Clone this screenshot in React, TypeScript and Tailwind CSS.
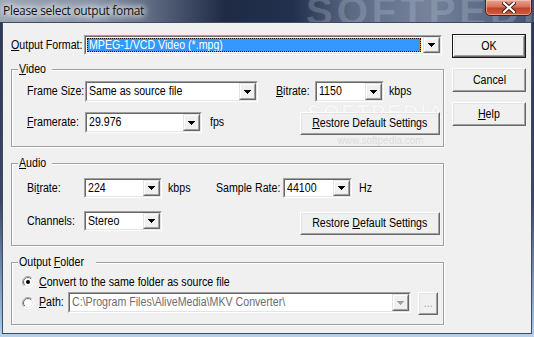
import React from "react";

const FONT = "font-['Liberation_Sans',Arial,sans-serif]";

function T({ children, center }: { children: React.ReactNode; center?: boolean }) {
  return (
    <span className={`inline-block whitespace-nowrap scale-x-[0.85] ${center ? "origin-center" : "origin-left"}`}>
      {children}
    </span>
  );
}

function Arrow({ disabled }: { disabled?: boolean }) {
  return (
    <svg width="7" height="4" viewBox="0 0 7 4" shapeRendering="crispEdges">
      <path d="M0 0H7V1H6V2H5V3H4V4H3V3H2V2H1V1H0Z" fill={disabled ? "#a0a0a0" : "#000"} />
    </svg>
  );
}

function DropBtn({ disabled }: { disabled?: boolean }) {
  return (
    <div className="w-[17px] h-full flex border border-t-[#e3e3e3] border-l-[#e3e3e3] border-b-[#696969] border-r-[#696969]">
      <div className="flex-1 flex items-center justify-center border border-t-white border-l-white border-b-[#a0a0a0] border-r-[#a0a0a0] bg-[#f0f0f0]">
        <Arrow disabled={disabled} />
      </div>
    </div>
  );
}

function Combo({
  cls,
  text,
  selected,
  disabled,
}: {
  cls: string;
  text: string;
  selected?: boolean;
  disabled?: boolean;
}) {
  return (
    <div className={`flex shrink-0 border border-t-[#a0a0a0] border-l-[#a0a0a0] border-b-white border-r-white ${cls}`}>
      <div className="flex-1 min-w-0 flex border border-t-[#696969] border-l-[#696969] border-b-[#e3e3e3] border-r-[#e3e3e3] bg-white">
        {selected ? (
          <div className="flex-1 min-w-0 p-[1px] pr-[2px]">
            <div className="h-full bg-[#d98a2a]">
              <div className="h-full border border-dotted border-[#111] bg-[#3399ff] bg-clip-padding text-white flex items-center pl-[1px] whitespace-nowrap overflow-hidden">
                <T>{text}</T>
              </div>
            </div>
          </div>
        ) : (
          <div
            className={`flex-1 min-w-0 flex items-center pl-[2px] whitespace-nowrap overflow-hidden ${
              disabled ? "text-[#6d6d6d]" : "text-black"
            }`}
          >
            <T>{text}</T>
          </div>
        )}
        <DropBtn disabled={disabled} />
      </div>
    </div>
  );
}

function Btn({
  cls,
  children,
  def,
  disabled,
}: {
  cls: string;
  children: React.ReactNode;
  def?: boolean;
  disabled?: boolean;
}) {
  return (
    <div className={`flex shrink-0 bg-[#f0f0f0] ${def ? "border border-[#1a1a1a]" : ""} ${cls}`}>
      <div className="flex-1 flex border border-t-white border-l-white border-b-[#696969] border-r-[#696969]">
        <div
          className={`flex-1 flex items-center justify-center border border-t-[#e3e3e3] border-l-[#e3e3e3] border-b-[#a0a0a0] border-r-[#a0a0a0] whitespace-nowrap ${
            disabled ? "text-[#a0a0a0]" : "text-black"
          }`}
        >
          <T center>{children}</T>
        </div>
      </div>
    </div>
  );
}

function Group({ label, cls, children }: { label: React.ReactNode; cls: string; children: React.ReactNode }) {
  return (
    <div className={`relative border border-[#a0a0a0] shadow-[inset_1px_1px_0_#fff,1px_1px_0_#fff] ${cls}`}>
      <span className="absolute left-[6px] top-[-8px] bg-[#f0f0f0] px-[1px] leading-[14px] whitespace-nowrap">
        <T>{label}</T>
      </span>
      {children}
    </div>
  );
}

function Label({ cls, children }: { cls: string; children: React.ReactNode }) {
  return (
    <span className={`shrink-0 flex items-center whitespace-nowrap ${cls}`}>
      <T>{children}</T>
    </span>
  );
}

function Radio({ checked }: { checked?: boolean }) {
  return (
    <svg width="12" height="12" viewBox="0 0 12 12" className="shrink-0">
      <defs>
        <linearGradient id="ro" x1="0" y1="0" x2="1" y2="1">
          <stop offset="0.45" stopColor="#a0a0a0" />
          <stop offset="0.55" stopColor="#ffffff" />
        </linearGradient>
        <linearGradient id="ri" x1="0" y1="0" x2="1" y2="1">
          <stop offset="0.45" stopColor="#696969" />
          <stop offset="0.55" stopColor="#e3e3e3" />
        </linearGradient>
      </defs>
      <circle cx="6" cy="6" r="5.5" fill="#fff" stroke="url(#ro)" strokeWidth="1" />
      <circle cx="6" cy="6" r="4.5" fill="#fff" stroke="url(#ri)" strokeWidth="1" />
      {checked && <circle cx="6" cy="6" r="2" fill="#000" />}
    </svg>
  );
}

export default function App() {
  return (
    <div
      className={`w-[534px] h-[337px] relative overflow-hidden flex flex-col bg-[linear-gradient(180deg,#2a3652_0%,#3a4866_60%,#9fbfe0_96%,#b8d2ec_100%)] text-[12.5px] leading-none ${FONT}`}
    >
      {/* Title bar */}
      <div className="h-[22px] shrink-0 relative overflow-hidden bg-[linear-gradient(90deg,#9aa5b4_0%,#8793a6_18%,#55627a_30%,#1f2b45_42%,#22304d_55%,#5d6a84_66%,#75829a_80%,#5a6884_92%,#40506e_100%)]">
        <span className="absolute left-[306px] top-[-9px] text-[40px] font-bold tracking-[4px] text-[#c4cede]/25 leading-none">
          SOFTPEDIA
        </span>
        <span className="absolute left-[3px] top-[4px] text-[12px] leading-[14px] tracking-[-0.3px] text-[#111] font-['Open_Sans','Noto_Sans',sans-serif] [text-shadow:0_0_6px_#fff,0_0_8px_#fff,0_0_10px_#fff]">
          Please select output fomat
        </span>
        <div className="absolute right-[2px] top-[-1px] w-[47px] h-[17px] rounded-b-[5px] border border-[#5b1a12] bg-[linear-gradient(180deg,#e8a595_0%,#d6705a_45%,#c0442a_55%,#cf5c3e_100%)] flex items-center justify-center shadow-[inset_0_0_0_1px_rgba(255,220,210,0.5)]">
          <svg width="14" height="11" viewBox="0 0 14 11">
            <path d="M2 1 L12 10 M12 1 L2 10" stroke="#3a1410" strokeWidth="4" strokeLinecap="square" />
            <path d="M2 1 L12 10 M12 1 L2 10" stroke="#fff" strokeWidth="2.2" strokeLinecap="square" />
          </svg>
        </div>
      </div>

      {/* Body frame */}
      <div className="flex-1 flex px-[2px] pb-[3px]">
        <div className="flex-1 border border-[#3e4c64] bg-[#f0f0f0] relative flex text-black">
          {/* Watermark */}
          <div className="pointer-events-none absolute left-[304px] top-[78px] flex flex-col items-center">
            <span className="text-[21px] font-bold tracking-[2px] text-[#f6f6f6] [text-shadow:0_0_1px_#d8d8d8]">
              SOFTPEDIA<sup className="text-[7px]">™</sup>
            </span>
            <span className="mt-[14px] text-[10px] text-[#dcdcdc]">www.softpedia.com</span>
          </div>

          {/* Left column */}
          <div className="relative w-[433px] ml-[8px] flex flex-col pt-[12px]">
            <div className="flex items-center h-[20px]">
              <Label cls="w-[73px]">
                <u>O</u>utput Format:
              </Label>
              <Combo cls="w-[358px] h-[20px]" text="MPEG-1/VCD Video (*.mpg)" selected />
            </div>

            <Group
              label={
                <>
                  <u>V</u>ideo
                </>
              }
              cls="mt-[14px] h-[78px] pl-[15px] pr-[6px] pt-[11px]"
            >
              <div className="flex items-center h-[21px]">
                <Label cls="w-[58px]">Frame Size:</Label>
                <Combo cls="w-[173px] h-[21px]" text="Same as source file" />
                <Label cls="ml-[18px] w-[39px]">
                  <u>B</u>itrate:
                </Label>
                <Combo cls="w-[69px] h-[21px]" text="1150" />
                <Label cls="ml-[5px]">kbps</Label>
              </div>
              <div className="flex items-start h-[23px] mt-[10px]">
                <Label cls="w-[58px] h-[21px]">
                  <u>F</u>ramerate:
                </Label>
                <Combo cls="w-[117px] h-[21px]" text="29.976" />
                <Label cls="ml-[8px] h-[21px]">fps</Label>
                <Btn cls="ml-auto w-[137px] h-[23px]">
                  <u>R</u>estore Default Settings
                </Btn>
              </div>
            </Group>

            <Group
              label={
                <>
                  <u>A</u>udio
                </>
              }
              cls="mt-[16px] h-[83px] pl-[15px] pr-[6px] pt-[14px]"
            >
              <div className="flex items-center h-[20px]">
                <Label cls="w-[57px]">
                  Bi<u>t</u>rate:
                </Label>
                <Combo cls="w-[78px] h-[20px]" text="224" />
                <Label cls="ml-[6px] w-[48px]">kbps</Label>
                <Label cls="w-[67px]">Sample Rate:</Label>
                <Combo cls="w-[69px] h-[20px]" text="44100" />
                <Label cls="ml-[7px]">Hz</Label>
              </div>
              <div className="flex items-start h-[24px] mt-[13px]">
                <Label cls="w-[57px] h-[20px]">Channels:</Label>
                <Combo cls="w-[78px] h-[20px]" text="Stereo" />
                <Btn cls="ml-auto mt-[1px] w-[137px] h-[23px]">
                  Restore <u>D</u>efault Settings
                </Btn>
              </div>
            </Group>

            <Group
              label={
                <>
                  Output <u>F</u>older
                </>
              }
              cls="mt-[16px] h-[63px] pl-[10px] pt-[11px]"
            >
              <div className="flex items-center h-[16px]">
                <Radio checked />
                <Label cls="ml-[5px]">
                  <u>C</u>onvert to the same folder as source file
                </Label>
              </div>
              <div className="flex items-start h-[23px] mt-[2px]">
                <div className="mt-[5px]">
                  <Radio />
                </div>
                <Label cls="ml-[5px] w-[29px] h-[21px]">
                  <u>P</u>ath:
                </Label>
                <Combo cls="w-[343px] h-[21px]" text="C:\Program Files\AliveMedia\MKV Converter\" disabled />
                <Btn cls="ml-[7px] w-[20px] h-[23px]" disabled>
                  ...
                </Btn>
              </div>
            </Group>
          </div>

          {/* Right column */}
          <div className="relative ml-[8px] w-[74px] flex flex-col pt-[11px]">
            <Btn cls="h-[24px] w-[74px]" def>
              OK
            </Btn>
            <Btn cls="mt-[10px] h-[24px] w-[74px]">Cancel</Btn>
            <Btn cls="mt-[10px] h-[24px] w-[74px]">
              <u>H</u>elp
            </Btn>
          </div>
        </div>
      </div>
    </div>
  );
}
